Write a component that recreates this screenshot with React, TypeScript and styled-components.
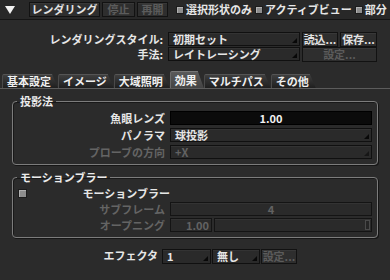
import styled, { createGlobalStyle } from "styled-components";

const GlobalStyle = createGlobalStyle`
  html, body {
    margin: 0;
    padding: 0;
    background: #2b2b2b;
  }
  body {
    font-family: "Noto Sans CJK JP", "Noto Sans", sans-serif;
  }
`;

const tabs = ["基本設定", "イメージ", "大域照明", "効果", "マルチパス", "その他"];

export default function App() {
  return (
    <Panel>
      <GlobalStyle />
      <TopBar>
        <Collapse width="10" height="8" viewBox="0 0 10 8">
          <polygon points="0,0 10,0 5,8" fill="#f2f2f2" />
        </Collapse>
        <Button $w={71}>レンダリング</Button>
        <Button $w={33} $disabled>停止</Button>
        <Button $w={31} $disabled>再開</Button>
        <CheckItem style={{ marginLeft: 6 }}>
          <TopCheck />
          選択形状のみ
        </CheckItem>
        <CheckItem>
          <TopCheck />
          アクティブビュー
        </CheckItem>
        <CheckItem>
          <TopCheck />
          部分
        </CheckItem>
      </TopBar>

      <StyleRows>
        <Row>
          <Label $w={163}>レンダリングスタイル:</Label>
          <Select $w={132}>初期セット</Select>
          <Button $w={36}>読込...</Button>
          <Button $w={37}>保存...</Button>
        </Row>
        <Row>
          <Label $w={163}>手法:</Label>
          <Select $w={132}>レイトレーシング</Select>
          <Button $w={75} $disabled>設定...</Button>
        </Row>
      </StyleRows>

      <TabBar>
        {tabs.map((t) => (
          <Tab key={t} $active={t === "効果"}>
            {t}
          </Tab>
        ))}
      </TabBar>

      <Group>
        <Legend>投影法</Legend>
        <GroupRow>
          <Label $w={152}>魚眼レンズ</Label>
          <Field>1.00</Field>
        </GroupRow>
        <GroupRow>
          <Label $w={152}>パノラマ</Label>
          <Select>球投影</Select>
        </GroupRow>
        <GroupRow>
          <Label $w={152} $disabled>
            プローブの方向
          </Label>
          <Select $disabled>+X</Select>
        </GroupRow>
      </Group>

      <Group $gap={2}>
        <Legend>モーションブラー</Legend>
        <GroupRow $h={13}>
          <Check style={{ marginLeft: 5 }} />
          <Label $w={141}>モーションブラー</Label>
        </GroupRow>
        <GroupRow>
          <Label $w={152} $disabled>
            サブフレーム
          </Label>
          <Field $disabled>4</Field>
        </GroupRow>
        <GroupRow>
          <Label $w={152} $disabled>
            オープニング
          </Label>
          <NumBox>1.00</NumBox>
          <Slider>
            <Thumb />
          </Slider>
        </GroupRow>
      </Group>

      <BottomRow>
        <Label $w={158}>エフェクタ</Label>
        <Select $w={49}>1</Select>
        <Select $w={48}>無し</Select>
        <Button $w={36} $disabled>
          設定...
        </Button>
      </BottomRow>
    </Panel>
  );
}

const Panel = styled.div`
  width: 390px;
  height: 280px;
  overflow: hidden;
  background: #2b2b2b;
  color: #e6e6e6;
  font-size: 11px;
  font-weight: 700;
  line-height: 13px;
  white-space: nowrap;
`;

const TopBar = styled.div`
  display: flex;
  align-items: center;
  gap: 2px;
  height: 19px;
  padding-left: 5px;
  background: #282828;
  border-bottom: 1px solid #151515;
  overflow: hidden;
`;

const Collapse = styled.svg`
  flex: none;
  margin-right: 12px;
`;

const Button = styled.div<{ $w: number; $disabled?: boolean }>`
  flex: none;
  box-sizing: border-box;
  width: ${(p) => p.$w}px;
  height: 15px;
  display: flex;
  align-items: center;
  justify-content: center;
  background: #2e2e2e;
  border: 1px solid #121212;
  box-shadow: inset 0 1px 0 #383838;
  color: ${(p) => (p.$disabled ? "#5c5c5c" : "#e2e2e2")};
`;

const CheckItem = styled.div`
  flex: none;
  display: flex;
  align-items: center;
  gap: 2px;
  margin-left: 1px;
`;

const Check = styled.span`
  flex: none;
  box-sizing: border-box;
  width: 9px;
  height: 9px;
  background: #8e8e8e;
  border: 1px solid #1c1c1c;
  box-shadow: inset 1px 1px 0 #b0b0b0;
`;

const TopCheck = styled(Check)`
  width: 8px;
  height: 8px;
`;

const StyleRows = styled.div`
  display: flex;
  flex-direction: column;
  gap: 1px;
  margin-top: 12px;
`;

const Row = styled.div`
  display: flex;
  align-items: center;
  gap: 2px;
  height: 14px;
`;

const Label = styled.div<{ $w: number; $disabled?: boolean }>`
  flex: none;
  width: ${(p) => p.$w}px;
  margin-right: 3px;
  text-align: right;
  color: ${(p) => (p.$disabled ? "#646464" : "#e6e6e6")};
`;

const Select = styled.div<{ $w?: number; $disabled?: boolean }>`
  position: relative;
  box-sizing: border-box;
  flex: ${(p) => (p.$w ? "none" : "1")};
  width: ${(p) => (p.$w ? `${p.$w}px` : "auto")};
  height: 14px;
  padding-left: 4px;
  display: flex;
  align-items: center;
  background: #2a2a2a;
  border: 1px solid #101010;
  box-shadow: inset 0 1px 0 #333;
  color: ${(p) => (p.$disabled ? "#626262" : "#e6e6e6")};
  &::after {
    content: "";
    position: absolute;
    right: 2px;
    bottom: 2px;
    border-left: 5px solid transparent;
    border-bottom: 5px solid ${(p) => (p.$disabled ? "#161616" : "#080808")};
  }
`;

const TabBar = styled.div`
  display: flex;
  align-items: flex-end;
  height: 17px;
  margin-top: 10px;
  padding-left: 2px;
  border-bottom: 1px solid #5c5c5c;
`;

const Tab = styled.div<{ $active?: boolean }>`
  box-sizing: border-box;
  height: ${(p) => (p.$active ? 17 : 14)}px;
  padding: 0 7px 0 4px;
  display: flex;
  align-items: center;
  color: #f0f0f0;
  background: ${(p) =>
    p.$active
      ? "linear-gradient(#5a5a5a, #444)"
      : "linear-gradient(#3e3e3e, #1f1f1f)"};
  border-top: 1px solid ${(p) => (p.$active ? "#777" : "#555")};
  border-left: 1px solid ${(p) => (p.$active ? "#6a6a6a" : "#4a4a4a")};
  border-top-left-radius: 2px;
  clip-path: polygon(0 0, calc(100% - 6px) 0, 100% 100%, 0 100%);
`;

const Group = styled.fieldset<{ $gap?: number }>`
  display: flex;
  flex-direction: column;
  gap: ${(p) => p.$gap ?? 3}px;
  margin: 6px 12px 0;
  padding: 4px 5px 5px 0;
  border: 1px solid #7c7c7c;
  border-radius: 4px;
  box-shadow: inset 1px 1px 0 #181818, 1px 1px 0 #161616;
  min-width: 0;
`;

const Legend = styled.legend`
  margin-left: 4px;
  padding: 0 3px;
  line-height: 12px;
  color: #ececec;
`;

const GroupRow = styled.div<{ $h?: number }>`
  display: flex;
  align-items: center;
  gap: 2px;
  height: ${(p) => p.$h ?? 14}px;
`;

const Field = styled.div<{ $disabled?: boolean }>`
  flex: 1;
  box-sizing: border-box;
  height: 14px;
  display: flex;
  align-items: center;
  justify-content: center;
  background: ${(p) => (p.$disabled ? "#2a2a2a" : "#0b0b0b")};
  border: 1px solid ${(p) => (p.$disabled ? "#141414" : "#000")};
  box-shadow: ${(p) => (p.$disabled ? "inset 0 1px 0 #333" : "none")};
  color: ${(p) => (p.$disabled ? "#626262" : "#f2f2f2")};
`;

const NumBox = styled.div`
  flex: none;
  box-sizing: border-box;
  width: 42px;
  height: 14px;
  padding-right: 2px;
  display: flex;
  align-items: center;
  justify-content: flex-end;
  background: #2a2a2a;
  border: 1px solid #141414;
  box-shadow: inset 0 1px 0 #333;
  color: #626262;
`;

const Slider = styled.div`
  flex: 1;
  box-sizing: border-box;
  height: 14px;
  display: flex;
  align-items: center;
  justify-content: flex-end;
  padding-right: 1px;
  background: #2a2a2a;
  border: 1px solid #141414;
  box-shadow: inset 0 1px 0 #333;
`;

const Thumb = styled.span`
  box-sizing: border-box;
  width: 5px;
  height: 10px;
  border: 1px solid #4a4a4a;
  background: #262626;
`;

const BottomRow = styled.div`
  display: flex;
  align-items: center;
  gap: 1px;
  height: 15px;
  margin-top: 11px;
  & > * {
    height: 15px;
  }
`;
